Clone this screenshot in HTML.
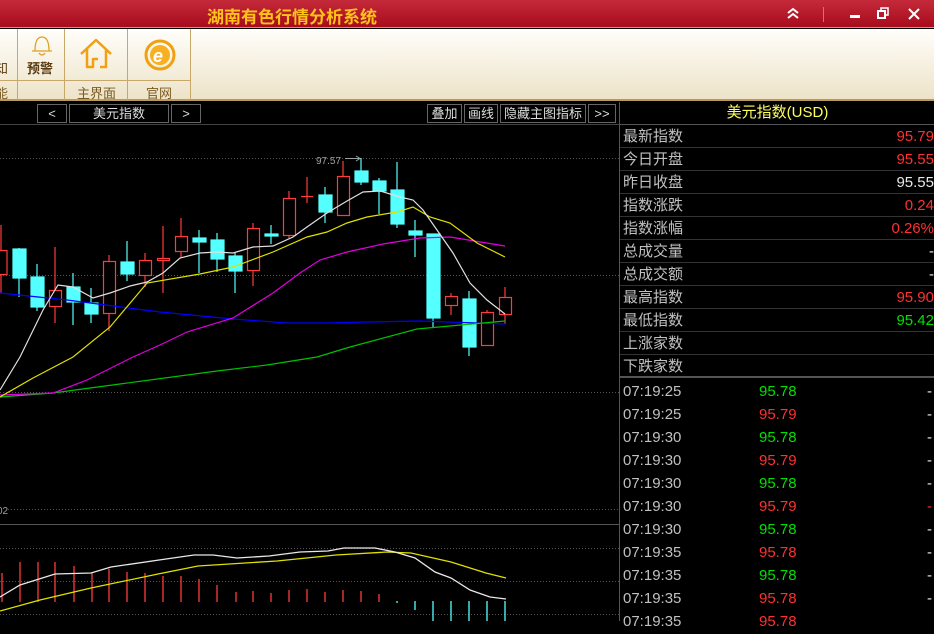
<!DOCTYPE html>
<html><head><meta charset="utf-8"><style>
*{margin:0;padding:0;box-sizing:border-box}
body{width:934px;height:621px;overflow:hidden;background:#000;font-family:"Liberation Sans","Noto Sans CJK SC",sans-serif;position:relative}
#title{position:absolute;left:0;top:0;width:934px;height:28px;background:linear-gradient(#c42a3a,#a80c1c);border-bottom:1px solid #c8a050}
#title .t{position:absolute;left:207px;top:3px;font-size:17px;font-weight:bold;color:#ffc21a;letter-spacing:0px}
#tb{position:absolute;left:0;top:29px;width:934px;height:72px;background:linear-gradient(#fffefa,#ede3c8);border-bottom:2px solid #b89a5a}
.vd{position:absolute;top:0;width:1px;height:71px;background:#c8a868}
.lb{position:absolute;font-size:13px;color:#7a5a20}
#nav{position:absolute;left:0;top:102px;width:619px;height:23px;border-bottom:1px solid #444}
.btn{position:absolute;top:2px;height:19px;border:1px solid #666;color:#ddd;font-size:13px;text-align:center;line-height:17px}
#rp{position:absolute;left:619px;top:102px;width:315px;height:519px;border-left:1px solid #555}
.row{position:absolute;left:0;width:315px;height:23px;border-bottom:1px solid #333;font-size:15px;line-height:24px;color:#c0c0c0}
.row .l{position:absolute;left:3px}.row .v{position:absolute;right:1px}
.tr{position:absolute;left:0;width:315px;height:23px;font-size:15px;line-height:24px;color:#c0c0c0}
.tr .a{position:absolute;left:3px}.tr .b{position:absolute;left:139px}.tr .c{position:absolute;right:3px}
.r{color:#ff3030}.g{color:#00e000}.w{color:#e8e8e8}
</style></head><body>
<div id="title"><div class="t">湖南有色行情分析系统</div>
<svg width="934" height="28" style="position:absolute;left:0;top:0">
<path d="M788 13 l5 -4 l5 4 M788 18 l5 -4 l5 4" stroke="#fff" stroke-width="2" fill="none"/>
<line x1="823.5" y1="7" x2="823.5" y2="22" stroke="#d07080"/>
<rect x="850" y="15" width="10" height="3" fill="#fff"/>
<rect x="878" y="11" width="7" height="7" fill="none" stroke="#fff" stroke-width="2"/>
<path d="M881 10 v-2 h7 v7 h-2" fill="none" stroke="#fff" stroke-width="1.5"/>
<path d="M909 9 l10 10 M919 9 l-10 10" stroke="#fff" stroke-width="2"/>
</svg></div>
<div id="tb">
<div class="vd" style="left:17px"></div><div class="vd" style="left:64px"></div><div class="vd" style="left:127px"></div><div class="vd" style="left:190px"></div>
<div style="position:absolute;left:0;top:51px;width:190px;height:1px;background:#c8a868"></div>
<div class="lb" style="left:-5px;top:29px;font-size:13px;color:#5a3a10">知</div>
<div class="lb" style="left:-5px;top:54px">能</div>
<div class="lb" style="left:27px;top:29px;color:#5a3a10;font-weight:bold">预警</div>
<svg style="position:absolute;left:31px;top:5px" width="22" height="24"><path d="M4 17 q0 -14 7 -14 q7 0 7 14 z M1 17 h20 M8 19 q3 4 6 0" stroke="#e0a020" stroke-width="1.3" fill="none"/></svg>
<div class="lb" style="left:77px;top:54px">主界面</div>
<svg style="position:absolute;left:78px;top:8px" width="38" height="34"><path d="M3 17 L18 3 L33 17 M9 12 V30 H15 V22 H20 M28 12 V30 H22" stroke="#f0a010" stroke-width="2.5" fill="none" stroke-linejoin="round"/></svg>
<div class="lb" style="left:146px;top:54px">官网</div>
<svg style="position:absolute;left:143px;top:9px" width="34" height="34"><circle cx="17" cy="17" r="14" fill="none" stroke="#f0a010" stroke-width="3"/><circle cx="17" cy="17" r="10" fill="#f8b020"/><text x="10" y="24" font-size="18" font-weight="bold" font-style="italic" fill="#fff" font-family="Liberation Sans">e</text></svg>
</div>
<div id="nav">
<div class="btn" style="left:37px;width:30px">&lt;</div>
<div class="btn" style="left:69px;width:100px">美元指数</div>
<div class="btn" style="left:171px;width:30px">&gt;</div>
<div class="btn" style="left:427px;width:35px">叠加</div>
<div class="btn" style="left:464px;width:34px">画线</div>
<div class="btn" style="left:500px;width:86px">隐藏主图指标</div>
<div class="btn" style="left:588px;width:28px">&gt;&gt;</div>
</div>
<svg style="position:absolute;left:0;top:125px" width="619" height="496" viewBox="0 125 619 496">
<g stroke="#555" stroke-dasharray="1 2"><line x1="0" y1="158.5" x2="619" y2="158.5"/><line x1="0" y1="275.5" x2="619" y2="275.5"/><line x1="0" y1="392.5" x2="619" y2="392.5"/><line x1="8" y1="509.5" x2="619" y2="509.5"/><line x1="0" y1="548.5" x2="619" y2="548.5"/><line x1="0" y1="581.5" x2="619" y2="581.5"/><line x1="0" y1="614.5" x2="619" y2="614.5"/></g>
<line x1="0" y1="524.5" x2="619" y2="524.5" stroke="#555"/>
<text x="316" y="164" font-size="10" fill="#a0a0a0" font-family="Liberation Sans">97.57</text>
<path d="M345 158.5 H360 M356 156 l4 2.5 l-4 2.5" stroke="#a0a0a0" fill="none"/>
<text x="-3" y="514" font-size="10" fill="#a0a0a0" font-family="Liberation Sans">02</text>
<g id="c" stroke-width="1.2">
<g stroke="#ff3b3b" fill="none">
<line x1="1" y1="225" x2="1" y2="293"/><rect x="-6" y="250.5" width="13" height="24" fill="#000"/>
<line x1="55" y1="247" x2="55" y2="323"/><rect x="49.5" y="290.5" width="12" height="16" fill="#000"/>
<line x1="109" y1="255" x2="109" y2="331"/><rect x="103.5" y="261.5" width="12" height="52" fill="#000"/>
<line x1="145" y1="253" x2="145" y2="287"/><rect x="139.5" y="260.5" width="12" height="15" fill="#000"/>
<line x1="163" y1="226" x2="163" y2="293"/><rect x="157.5" y="258.5" width="12" height="2" fill="#000"/>
<line x1="181" y1="218" x2="181" y2="258"/><rect x="175.5" y="236.5" width="12" height="15" fill="#000"/>
<line x1="253" y1="223" x2="253" y2="286"/><rect x="247.5" y="228.5" width="12" height="42" fill="#000"/>
<line x1="289" y1="191" x2="289" y2="238"/><rect x="283.5" y="198.5" width="12" height="37" fill="#000"/>
<line x1="307" y1="177" x2="307" y2="203"/><line x1="301" y1="196.5" x2="313" y2="196.5"/>
<line x1="343" y1="161" x2="343" y2="216"/><rect x="337.5" y="176.5" width="12" height="39" fill="#000"/>
<line x1="451" y1="293" x2="451" y2="315"/><rect x="445.5" y="296.5" width="12" height="9" fill="#000"/>
<line x1="487" y1="310" x2="487" y2="345"/><rect x="481.5" y="312.5" width="12" height="33" fill="#000"/>
<line x1="505" y1="287" x2="505" y2="324"/><rect x="499.5" y="297.5" width="12" height="17" fill="#000"/>
</g>
<g stroke="#54ffff" fill="#54ffff">
<line x1="19" y1="248" x2="19" y2="297"/><rect x="13" y="249" width="13" height="29"/>
<line x1="37" y1="264" x2="37" y2="311"/><rect x="31" y="277" width="13" height="30"/>
<line x1="73" y1="273" x2="73" y2="325"/><rect x="67" y="287" width="13" height="15"/>
<line x1="91" y1="288" x2="91" y2="323"/><rect x="85" y="303" width="13" height="11"/>
<line x1="127" y1="241" x2="127" y2="281"/><rect x="121" y="262" width="13" height="12"/>
<line x1="199" y1="230" x2="199" y2="273"/><rect x="193" y="238" width="13" height="4"/>
<line x1="217" y1="233" x2="217" y2="272"/><rect x="211" y="240" width="13" height="19"/>
<line x1="235" y1="252" x2="235" y2="293"/><rect x="229" y="256" width="13" height="15"/>
<line x1="271" y1="225" x2="271" y2="244"/><rect x="265" y="234" width="13" height="2"/>
<line x1="325" y1="187" x2="325" y2="223"/><rect x="319" y="195" width="13" height="17"/>
<line x1="361" y1="158" x2="361" y2="185"/><rect x="355" y="171" width="13" height="11"/>
<line x1="379" y1="178" x2="379" y2="214"/><rect x="373" y="181" width="13" height="10"/>
<line x1="397" y1="162" x2="397" y2="228"/><rect x="391" y="190" width="13" height="34"/>
<line x1="415" y1="220" x2="415" y2="257"/><rect x="409" y="231" width="13" height="4"/>
<line x1="433" y1="234" x2="433" y2="327"/><rect x="427" y="234" width="13" height="84"/>
<line x1="469" y1="291" x2="469" y2="356"/><rect x="463" y="299" width="13" height="48"/>
</g></g>
<g fill="none" stroke-width="1.2">
<polyline stroke="#0000ff" points="0,293 67,300 160,312 233,319 287,323 327,323 367,322 420,321 505,324"/>
<polyline stroke="#00c000" points="0,397 53,393 120,384 217,371 267,365 317,357 350,347 417,329 505,321"/>
<polyline stroke="#e000e0" points="0,395 53,393 87,380 133,357 160,345 187,332 233,318 273,293 300,273 320,260 347,252 383,244 420,238 450,237 505,246"/>
<polyline stroke="#e0e000" points="0,397 33,378 73,357 110,327 147,283 200,274 233,267 273,252 307,237 327,232 347,223 367,217 397,212 413,207 430,217 450,223 477,243 505,257"/>
<polyline stroke="#e0e0e0" points="0,390 20,357 43,310 58,285 73,287 93,298 110,293 130,286 147,282 163,273 180,258 200,253 217,252 233,253 253,247 273,246 293,237 307,227 327,213 347,201 363,192 380,191 400,197 413,200 423,210 437,230 453,253 470,283 487,300 505,314"/>
</g>
<g stroke="#ff3b3b" stroke-width="1.3">
<line x1="2" y1="573" x2="2" y2="602"/><line x1="20" y1="562" x2="20" y2="602"/><line x1="38" y1="562" x2="38" y2="602"/><line x1="55" y1="562" x2="55" y2="602"/><line x1="74" y1="566" x2="74" y2="602"/><line x1="92" y1="572" x2="92" y2="602"/><line x1="109" y1="569" x2="109" y2="602"/><line x1="127" y1="572" x2="127" y2="602"/><line x1="145" y1="573" x2="145" y2="602"/><line x1="163" y1="576" x2="163" y2="602"/><line x1="181" y1="576" x2="181" y2="602"/><line x1="199" y1="579" x2="199" y2="602"/><line x1="217" y1="585" x2="217" y2="602"/><line x1="236" y1="592" x2="236" y2="602"/><line x1="253" y1="591" x2="253" y2="602"/><line x1="271" y1="593" x2="271" y2="602"/><line x1="289" y1="590" x2="289" y2="602"/><line x1="307" y1="589" x2="307" y2="602"/><line x1="325" y1="592" x2="325" y2="602"/><line x1="343" y1="590" x2="343" y2="602"/><line x1="361" y1="591" x2="361" y2="602"/><line x1="379" y1="594" x2="379" y2="602"/>
</g>
<g stroke="#54ffff" stroke-width="1.3">
<line x1="397" y1="601" x2="397" y2="603"/><line x1="415" y1="601" x2="415" y2="610"/><line x1="433" y1="601" x2="433" y2="621"/><line x1="451" y1="601" x2="451" y2="621"/><line x1="469" y1="601" x2="469" y2="621"/><line x1="487" y1="601" x2="487" y2="621"/><line x1="505" y1="601" x2="505" y2="621"/>
</g>
<g fill="none" stroke-width="1.3">
<polyline stroke="#e0e000" points="0,611 40,600 91,588 158,574 198,566 277,561 336,555 387,552 411,553 451,562 486,573 506,578"/>
<polyline stroke="#e8e8e8" points="0,597 20,585 55,574 91,573 111,567 166,559 194,555 213,555 237,558 269,556 300,552 328,551 344,548 375,548 395,552 415,558 435,572 451,578 470,590 490,597 506,599"/>
</g>
</svg>
<div id="rp">
<div class="row" style="top:0;text-align:center;color:#ffff60;border-bottom:1px solid #555;line-height:22px">美元指数(USD)</div>
<div class="row" style="top:23px"><span class="l">最新指数</span><span class="v r">95.79</span></div>
<div class="row" style="top:46px"><span class="l">今日开盘</span><span class="v r">95.55</span></div>
<div class="row" style="top:69px"><span class="l">昨日收盘</span><span class="v w">95.55</span></div>
<div class="row" style="top:92px"><span class="l">指数涨跌</span><span class="v r">0.24</span></div>
<div class="row" style="top:115px"><span class="l">指数涨幅</span><span class="v r">0.26%</span></div>
<div class="row" style="top:138px"><span class="l">总成交量</span><span class="v w">-</span></div>
<div class="row" style="top:161px"><span class="l">总成交额</span><span class="v w">-</span></div>
<div class="row" style="top:184px"><span class="l">最高指数</span><span class="v r">95.90</span></div>
<div class="row" style="top:207px"><span class="l">最低指数</span><span class="v g">95.42</span></div>
<div class="row" style="top:230px"><span class="l">上涨家数</span></div>
<div class="row" style="top:253px;border-bottom:2px solid #555"><span class="l">下跌家数</span></div>
<div class="tr" style="top:278px"><span class="a">07:19:25</span><span class="b g">95.78</span><span class="c w">-</span></div>
<div class="tr" style="top:301px"><span class="a">07:19:25</span><span class="b r">95.79</span><span class="c w">-</span></div>
<div class="tr" style="top:324px"><span class="a">07:19:30</span><span class="b g">95.78</span><span class="c w">-</span></div>
<div class="tr" style="top:347px"><span class="a">07:19:30</span><span class="b r">95.79</span><span class="c w">-</span></div>
<div class="tr" style="top:370px"><span class="a">07:19:30</span><span class="b g">95.78</span><span class="c w">-</span></div>
<div class="tr" style="top:393px"><span class="a">07:19:30</span><span class="b r">95.79</span><span class="c r">-</span></div>
<div class="tr" style="top:416px"><span class="a">07:19:30</span><span class="b g">95.78</span><span class="c w">-</span></div>
<div class="tr" style="top:439px"><span class="a">07:19:35</span><span class="b r">95.78</span><span class="c w">-</span></div>
<div class="tr" style="top:462px"><span class="a">07:19:35</span><span class="b g">95.78</span><span class="c w">-</span></div>
<div class="tr" style="top:485px"><span class="a">07:19:35</span><span class="b r">95.78</span><span class="c w">-</span></div>
<div class="tr" style="top:508px"><span class="a">07:19:35</span><span class="b r">95.78</span></div>
</div>
</body></html>
